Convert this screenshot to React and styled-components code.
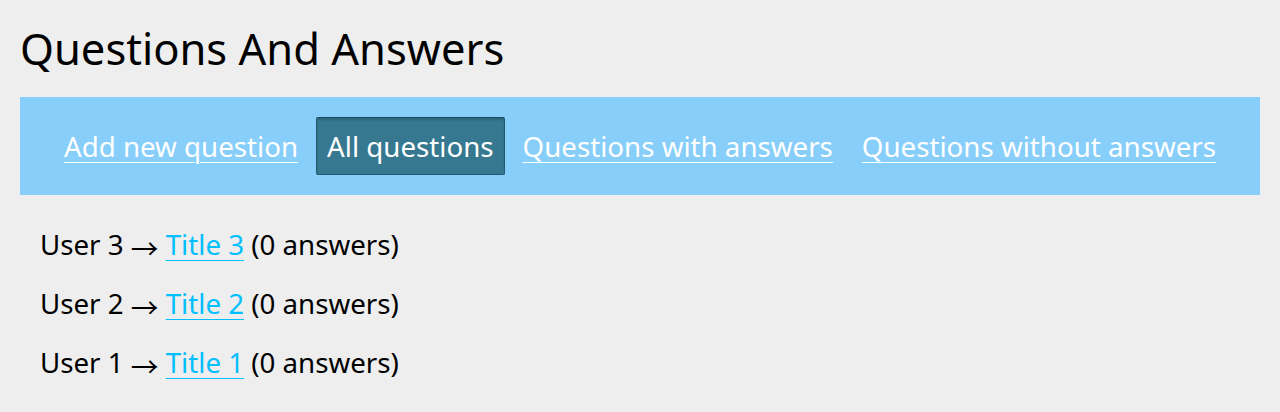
import React from 'react';
import styled, { createGlobalStyle } from 'styled-components';

const GlobalStyle = createGlobalStyle`
  body {
    margin: 0;
    background: #eeeeee;
    font-family: "Noto Sans", "Open Sans", sans-serif;
    color: #000;
  }
`;

const Page = styled.div`
  padding: 20px;
`;

const Heading = styled.h1`
  margin: 0 0 20px;
  font-size: 43.5px;
  font-weight: 400;
  line-height: 57px;
`;

const Nav = styled.nav`
  display: flex;
  justify-content: center;
  align-items: center;
  gap: 7px;
  padding: 20px;
  background: #87cefa;
`;

const NavItem = styled.a`
  display: block;
  padding: 10px;
  font-size: 27.7px;
  line-height: 36px;
  color: #fff;
  border: 1px solid ${({ active }) => (active ? '#245a6c' : 'transparent')};
  border-top-color: ${({ active }) => (active ? '#1b4a5a' : 'transparent')};
  border-radius: 2px;
  background: ${({ active }) => (active ? '#367890' : 'transparent')};
  box-shadow: ${({ active }) => (active ? 'inset 0 2px 2px rgba(0,0,0,0.15)' : 'none')};
  text-decoration: ${({ active }) => (active ? 'none' : 'underline')};
  text-decoration-thickness: 1px;
  text-underline-offset: 5px;
  cursor: pointer;
`;

const List = styled.ul`
  list-style: none;
  margin: 30px 0 0;
  padding: 0 20px;
  display: flex;
  flex-direction: column;
  gap: 21px;
`;

const Item = styled.li`
  font-size: 27.7px;
  line-height: 38px;
  height: 38px;
`;

const Arrow = styled.span`
  font-family: "Noto Sans CJK SC", sans-serif;
  line-height: 1;
  vertical-align: -4px;
`;

const TitleLink = styled.a`
  color: #00bfff;
  text-decoration: underline;
  text-decoration-thickness: 1px;
  text-underline-offset: 5px;
  cursor: pointer;
`;

const tabs = [
  'Add new question',
  'All questions',
  'Questions with answers',
  'Questions without answers',
];

const questions = [
  { user: 'User 3', title: 'Title 3', answers: 0 },
  { user: 'User 2', title: 'Title 2', answers: 0 },
  { user: 'User 1', title: 'Title 1', answers: 0 },
];

const App = () => {
  return (
    <Page>
      <GlobalStyle />
      <Heading>Questions And Answers</Heading>
      <Nav>
        {tabs.map((t) => (
          <NavItem key={t} active={t === 'All questions'}>
            {t}
          </NavItem>
        ))}
      </Nav>
      <List>
        {questions.map((q) => (
          <Item key={q.title}>
            {q.user} <Arrow>→</Arrow> <TitleLink>{q.title}</TitleLink> ({q.answers} answers)
          </Item>
        ))}
      </List>
    </Page>
  );
};

export default App;
